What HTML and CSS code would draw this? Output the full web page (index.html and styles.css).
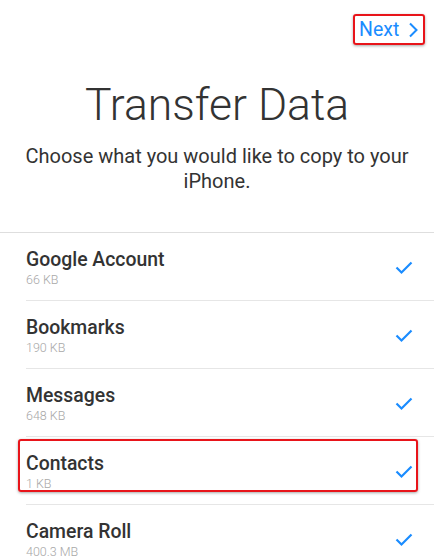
FILE: index.html
```html
<!DOCTYPE html>
<html>
<head>
<meta charset="utf-8">
<link rel="stylesheet" href="styles.css">
</head>
<body>
<div class="screen">
  <header class="topbar">
    <div class="next highlight">
      <span>Next</span>
      <svg class="chev" width="11" height="16" viewBox="0 0 11 16"><path d="M2 1.5 L8.5 8 L2 14.5" fill="none" stroke="#1a8cff" stroke-width="2"/></svg>
    </div>
  </header>
  <h1 class="title">Transfer Data</h1>
  <p class="subtitle">Choose what you would like to copy to your iPhone.</p>
  <ul class="list">
    <li class="row">
      <div class="text"><div class="name">Google Account</div><div class="size">66 KB</div></div>
      <svg class="check" width="18" height="14" viewBox="0 0 18 14"><path d="M1.5 6.5 L6.5 11.5 L16.5 1.5" fill="none" stroke="#1a8cff" stroke-width="2.2"/></svg>
    </li>
    <li class="row">
      <div class="text"><div class="name">Bookmarks</div><div class="size">190 KB</div></div>
      <svg class="check" width="18" height="14" viewBox="0 0 18 14"><path d="M1.5 6.5 L6.5 11.5 L16.5 1.5" fill="none" stroke="#1a8cff" stroke-width="2.2"/></svg>
    </li>
    <li class="row">
      <div class="text"><div class="name">Messages</div><div class="size">648 KB</div></div>
      <svg class="check" width="18" height="14" viewBox="0 0 18 14"><path d="M1.5 6.5 L6.5 11.5 L16.5 1.5" fill="none" stroke="#1a8cff" stroke-width="2.2"/></svg>
    </li>
    <li class="row marked">
      <div class="text"><div class="name">Contacts</div><div class="size">1 KB</div></div>
      <svg class="check" width="18" height="14" viewBox="0 0 18 14"><path d="M1.5 6.5 L6.5 11.5 L16.5 1.5" fill="none" stroke="#1a8cff" stroke-width="2.2"/></svg>
    </li>
    <li class="row">
      <div class="text"><div class="name">Camera Roll</div><div class="size">400.3 MB</div></div>
      <svg class="check" width="18" height="14" viewBox="0 0 18 14"><path d="M1.5 6.5 L6.5 11.5 L16.5 1.5" fill="none" stroke="#1a8cff" stroke-width="2.2"/></svg>
    </li>
  </ul>
</div>
</body>
</html>
```
FILE: styles.css
```css
html, body {
  margin: 0;
  padding: 0;
  background: #fff;
}
body {
  font-family: Roboto, "Noto Sans", sans-serif;
  color: #333;
  overflow: hidden;
  height: 560px;
}
.screen {
  width: 434px;
}
.topbar {
  display: flex;
  justify-content: flex-end;
  padding: 14px 9px 0 0;
  height: 30px;
}
.next {
  box-sizing: border-box;
  width: 72px;
  height: 31px;
  display: flex;
  align-items: center;
  gap: 9px;
  padding-left: 4px;
  color: #1a8cff;
  font-size: 19.5px;
}
.highlight {
  border: 2px solid #e8141a;
  border-radius: 3px;
  box-shadow: 0 1px 3px rgba(0,0,0,0.35);
}
.title {
  margin: 35px 0 0;
  font-size: 44.5px;
  line-height: 52px;
  font-weight: 300;
  text-align: center;
  color: #333;
}
.subtitle {
  margin: 13px 0 0;
  padding: 0 16px;
  font-size: 20px;
  line-height: 25px;
  text-align: center;
  color: #333;
}
.list {
  list-style: none;
  margin: 38px 0 0;
  padding: 0;
  border-top: 1px solid #dedede;
}
.row {
  position: relative;
  display: flex;
  align-items: center;
  justify-content: space-between;
  margin-left: 26px;
  padding: 16px 21px 13px 0;
  border-bottom: 1px solid #e6e6e6;
}
.name {
  font-size: 19.4px;
  line-height: 22px;
  font-weight: 500;
  color: #333;
}
.size {
  margin-top: 2px;
  font-size: 12.5px;
  line-height: 14px;
  font-weight: 300;
  color: #a8a8a8;
}
.check {
  display: block;
}
.marked::after {
  content: "";
  position: absolute;
  left: -8px;
  right: 16px;
  top: 2px;
  height: 49px;
  border: 2px solid #e8141a;
  border-radius: 3px;
  box-shadow: 0 1px 3px rgba(0,0,0,0.35);
}
```
